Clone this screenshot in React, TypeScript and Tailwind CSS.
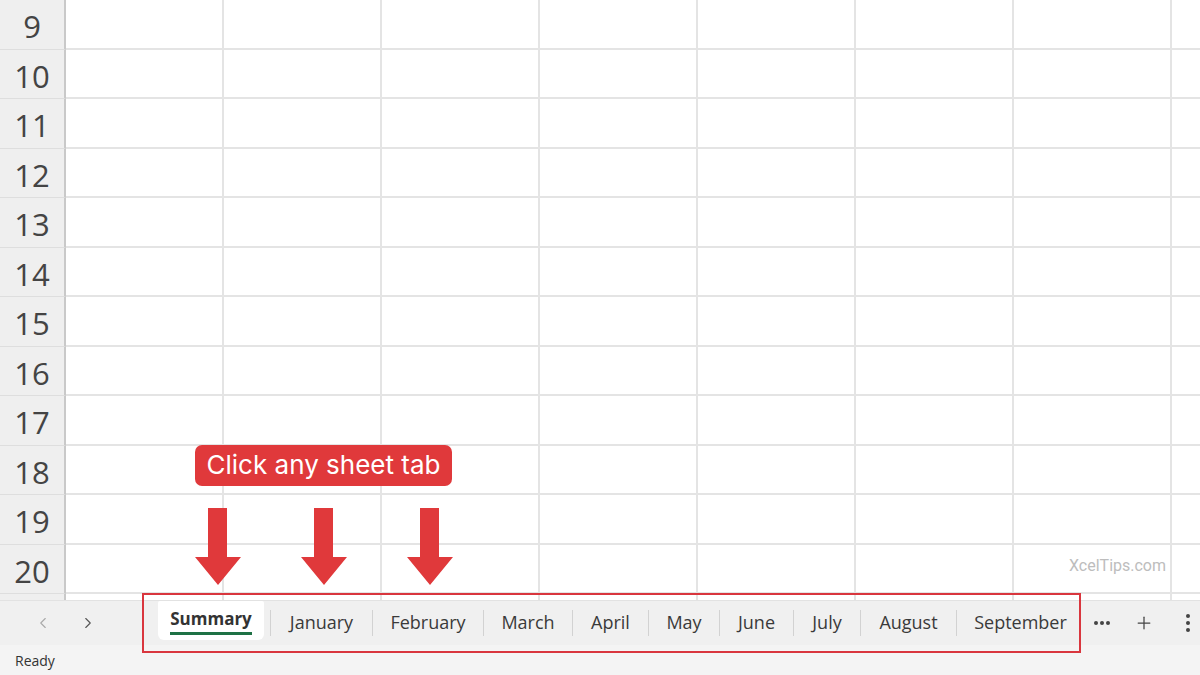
import { Plus, ChevronLeft, ChevronRight } from 'lucide-react'

const ROWS = [9, 10, 11, 12, 13, 14, 15, 16, 17, 18, 19, 20]
const COLS = [0, 1, 2, 3, 4, 5, 6, 7]

// width of each tab, measured from the separators
const TABS: Array<{ name: string; w: string }> = [
  { name: 'January', w: 'w-[102px]' },
  { name: 'February', w: 'w-[111px]' },
  { name: 'March', w: 'w-[89px]' },
  { name: 'April', w: 'w-[76px]' },
  { name: 'May', w: 'w-[71px]' },
  { name: 'June', w: 'w-[74px]' },
  { name: 'July', w: 'w-[67px]' },
  { name: 'August', w: 'w-[96px]' },
  { name: 'September', w: 'w-[128px]' },
]

function DownArrow() {
  return (
    <svg width="46" height="77" viewBox="0 0 46 77">
      <path d="M13 0 H32 V49 H46 L23 77 L0 49 H13 Z" fill="#e0393b" />
    </svg>
  )
}

function Dot() {
  return <span className="w-[4px] h-[4px] rounded-full bg-[#444]" />
}

export default function App() {
  return (
    <div className="relative w-[1200px] h-[675px] overflow-hidden bg-white font-['Open_Sans',sans-serif]">
      {/* ── Grid ─────────────────────────────────────────── */}
      <div className="h-[600px] overflow-hidden">
        {ROWS.map((r) => (
          <div key={r} className="flex h-[49.5px] shrink-0">
            <div className="w-[66px] shrink-0 bg-[#efefef] border-r-2 border-[#c9c9c9] border-b border-b-[#dedede] flex items-center justify-center text-[31px] text-[#444] pt-[4px]">
              {r}
            </div>
            {COLS.map((c) => (
              <div key={c} className="w-[158px] shrink-0 border-r-2 border-b-2 border-[#e4e4e4]" />
            ))}
          </div>
        ))}
        {/* sliver of the next row, no number visible */}
        <div className="flex h-[10px]">
          <div className="w-[66px] shrink-0 bg-[#efefef] border-r-2 border-[#c9c9c9]" />
          {COLS.map((c) => (
            <div key={c} className="w-[158px] shrink-0 border-r-2 border-[#e4e4e4]" />
          ))}
        </div>
      </div>

      {/* ── Sheet tab bar ────────────────────────────────── */}
      <div className="h-[45px] bg-[#f0f0f0] border-t border-[#e2e2e2] flex items-center text-[#333]">
        <div className="w-[158px] shrink-0 flex items-center">
          <ChevronLeft className="ml-[34px] text-[#a9a9a9]" size={18} strokeWidth={1.5} />
          <ChevronRight className="ml-[27px] text-[#555]" size={18} strokeWidth={1.5} />
        </div>
        <div className="w-[106px] h-[39px] self-start bg-white rounded-b-[6px] rounded-t-[2px] flex flex-col items-center justify-center">
          <span className="text-[17px] font-bold text-[#333] leading-[22px] pt-[2px] pb-[2px] border-b-[3px] border-[#1e7145]">
            Summary
          </span>
        </div>
        <div className="w-[6px]" />
        {TABS.map((t) => (
          <div key={t.name} className={`${t.w} shrink-0 flex items-center`}>
            <div className="w-px h-[26px] bg-[#d2d2d2]" />
            <span className="flex-1 text-center text-[18px] text-[#3a3a3a] -mt-[1px]">{t.name}</span>
          </div>
        ))}
        <div className="ml-[10px] flex gap-[2px]">
          <Dot />
          <Dot />
          <Dot />
        </div>
        <Plus className="ml-[24px] text-[#444]" size={20} strokeWidth={1.5} />
        <div className="ml-[32px] flex flex-col gap-[3px]">
          <Dot />
          <Dot />
          <Dot />
        </div>
      </div>

      {/* ── Status bar ───────────────────────────────────── */}
      <div className="h-[30px] bg-[#f4f4f4] flex items-center pl-[15px] text-[14px] text-[#333]">
        Ready
      </div>

      {/* ── Overlays ─────────────────────────────────────── */}
      <div className="absolute left-[1069px] top-[554px] text-[16px] text-[#bdbdbd] font-['Roboto',sans-serif]">
        XcelTips.com
      </div>

      <div className="absolute left-[195px] top-[445px] w-[257px] h-[41px] rounded-[7px] bg-[#e0393b] text-white flex items-center justify-center text-[26px] leading-none pb-[2px] font-['Inter',sans-serif]">
        Click any sheet tab
      </div>

      <div className="absolute left-[195px] top-[508px]"><DownArrow /></div>
      <div className="absolute left-[301px] top-[508px]"><DownArrow /></div>
      <div className="absolute left-[407px] top-[508px]"><DownArrow /></div>

      <div className="absolute left-[142px] top-[593px] w-[939px] h-[60px] border-2 border-[#d9363e]" />
    </div>
  )
}
